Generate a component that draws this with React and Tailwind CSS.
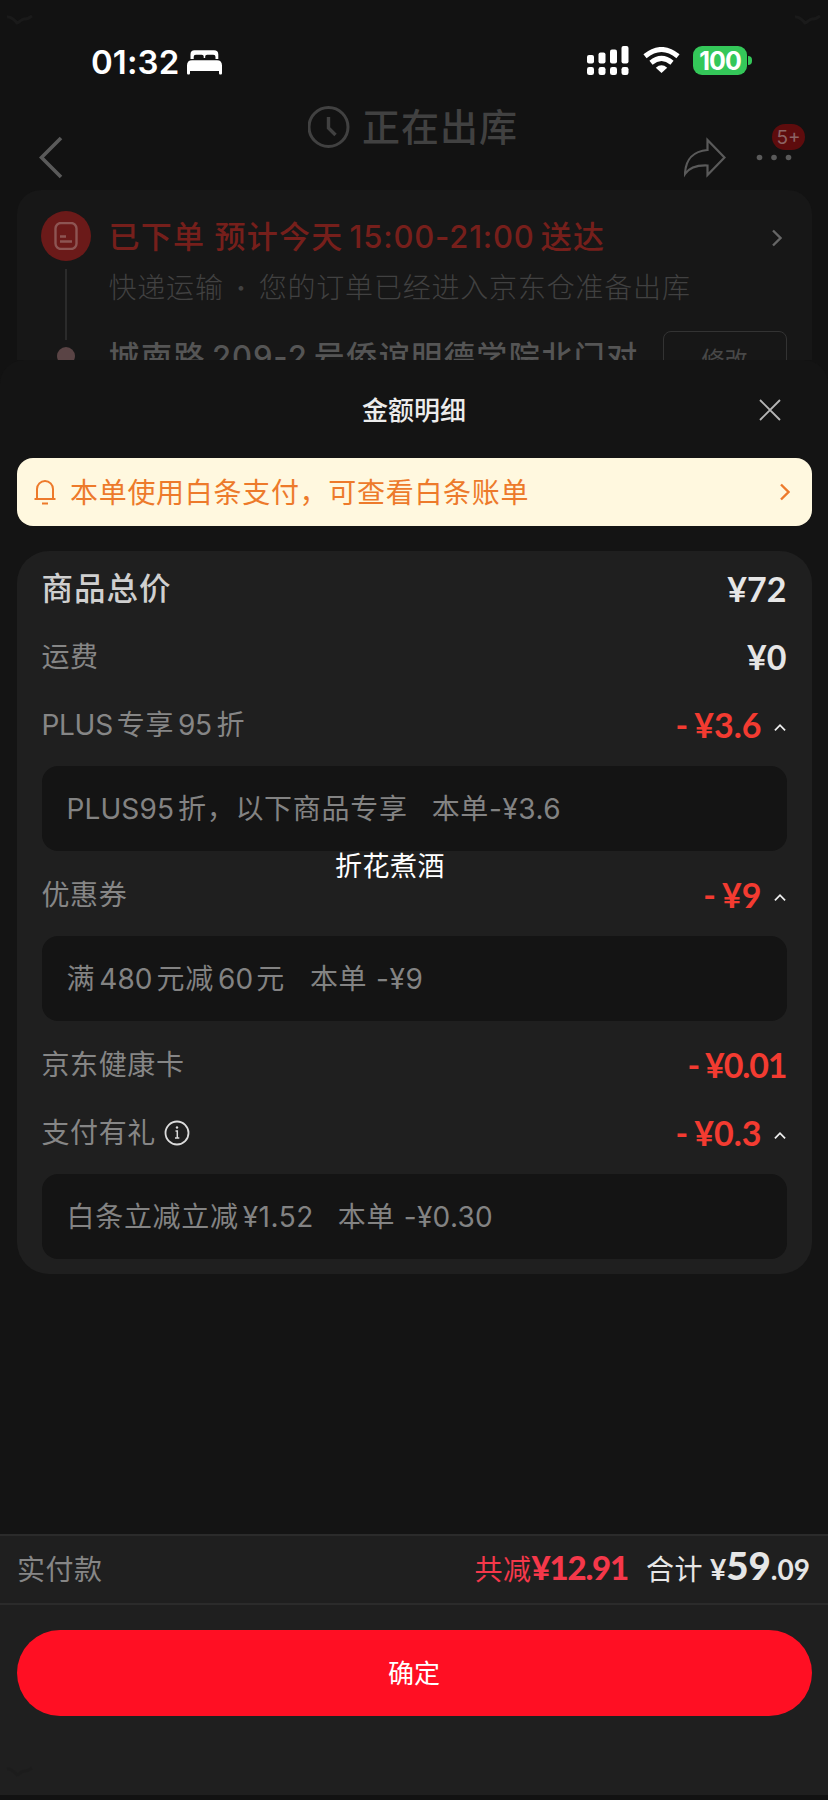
import React from "react";

const NOTE = "flex h-[85px] items-center rounded-[16px] bg-[#141414] pl-[25px] text-[28px] tracking-[0.7px] text-[#838383]";

const rows = [
  { label: "商品总价", price: "¥72", main: true },
  { label: "运费", price: "¥0" },
  {
    label: <><span className="tracking-[-0.3px]">PLUS</span><span className="mx-[4px]">专享</span><span className="tracking-[-0.5px]">95</span><span className="ml-[5px]">折</span></>,
    price: "¥3.6",
    off: true,
    note: <><span className="tracking-[0.1px]">PLUS95</span><span className="ml-[4px]">折，以下商品专享</span><span className="ml-[24px]">本单<span className="tracking-[0.5px]">-¥3.6</span></span></>,
  },
  {
    label: "优惠券",
    price: "¥9",
    off: true,
    note: <>满<span className="mx-[4px] tracking-[0.1px]">480</span>元减<span className="ml-[4px] mr-[3px] tracking-[0.1px]">60</span>元<span className="ml-[25px]">本单 -¥9</span></>,
  },
  { label: "京东健康卡", price: "¥0.01", off: true, tight: true },
  {
    label: "支付有礼",
    price: "¥0.3",
    off: true,
    info: true,
    note: <>白条立减立减<span className="ml-[4px] tracking-[0.5px]">¥1.52</span><span className="ml-[24px]">本单 <span className="tracking-[0.3px]">-¥0.30</span></span></>,
  },
];

function Chevron({ className }) {
  return (
    <svg className={className} width="10" height="18" viewBox="0 0 10 18" fill="none" stroke="currentColor" strokeWidth="2.4">
      <path d="M1 1.5 8.5 9 1 16.5" />
    </svg>
  );
}

function Smudge({ className }) {
  return (
    <svg className={className} width="28" height="14" viewBox="0 0 28 14" fill="none" stroke="#1a1a1a" strokeWidth="3">
      <path d="M1 3c5-1 7 3 10 6 3 0 4-5 8-4 3 0 4-1 7-3" />
    </svg>
  );
}

function StatusBar() {
  return (
    <div className="flex h-[98px] items-start pl-[91px] pr-[76px] pt-[44px] text-white">
      <div className="flex h-[36px] w-[96px] items-center whitespace-nowrap text-[33px] font-semibold leading-none tracking-[0.1px]">01:32</div>
      <svg className="mt-[6px]" width="35" height="25" viewBox="0 0 35 25" fill="currentColor">
        <path d="M3.500 9V4.500C3.500 1.500 5 .3 7.500.3H27c2.800 0 4.300 1.200 4.300 4.200V9h-2.800V7.200c0-1.700-.8-2.500-2.300-2.500h-6c-1.300 0-2 .8-2 2V8h-1.500V6.700c0-1.200-.7-2-2-2H9c-1.600 0-2.300.8-2.300 2.500V9z" />
        <path d="M0 15.500C0 12 1.800 10.200 5 10.200h25c3.200 0 5 1.800 5 5.300V23c0 1-.5 1.500-1.500 1.500S32 24 32 23v-2H3v2c0 1-.5 1.500-1.500 1.500S0 24 0 23z" />
      </svg>
      <div className="ml-auto flex items-center">
        <svg className="mt-[2px]" width="42" height="29" viewBox="0 0 42 29" fill="currentColor">
          <rect x="0" y="9" width="7" height="8.500" rx="2" />
          <rect x="11.500" y="6.500" width="7" height="11" rx="2" />
          <rect x="23" y="3.500" width="7" height="14" rx="2" />
          <rect x="34.500" y="0" width="7" height="17.500" rx="2" />
          <rect x="0" y="21" width="7" height="8" rx="2.300" />
          <rect x="11.500" y="21" width="7" height="8" rx="2.300" />
          <rect x="23" y="21" width="7" height="8" rx="2.300" />
          <rect x="34.500" y="21" width="7" height="8" rx="2.300" />
        </svg>
        <svg className="ml-[14px] mt-[1px]" width="37" height="26" viewBox="0 0 37 26">
          <g fill="none" stroke="currentColor" strokeWidth="5">
            <path d="M2 9.300Q18.500-4.300 35 9.300" />
            <path d="M8 15.700q10.500-8.600 21 0" />
          </g>
          <path d="M12.800 20.700q5.700-4.700 11.400 0L18.500 26z" fill="currentColor" />
        </svg>
        <div className="ml-[13px] mt-[2px] flex h-[29px] w-[54px] items-center justify-center rounded-[9px] bg-[#34c759] pt-[1px] text-[25px] font-bold leading-none tracking-[-1px]">100</div>
        <div className="ml-[1px] mt-[2px] h-[9px] w-[4px] rounded-r-full bg-[#34c759]" />
      </div>
    </div>
  );
}

function OrderHeader() {
  return (
    <div className="relative h-[92px]">
      <div className="flex items-center pl-[308px] pt-[6px] text-[#414141]">
        <svg width="42" height="46" viewBox="0 0 42 46" fill="none" stroke="currentColor">
          <circle cx="20.500" cy="23" r="19.500" strokeWidth="3" />
          <path d="M20.500 13v11l7 7" strokeWidth="3.400" />
        </svg>
        <div className="ml-[12px] text-[38px] font-medium leading-[46px] tracking-[1px]">正在出库</div>
      </div>
      <div className="absolute left-[39px] right-[23px] top-[26px] flex items-center">
        <svg width="24" height="66" viewBox="0 0 24 66" fill="none" stroke="#5a5a5a" strokeWidth="3.600">
          <path d="M22 14 2.500 33.500 22 53" />
        </svg>
        <svg className="ml-auto" width="42" height="66" viewBox="0 0 42 66" fill="none" stroke="#5a5a5a" strokeWidth="2.200">
          <path d="M23.500 16v10C10 27 1.500 35 1 50c4-6 10-9 22.500-8.500V51L40.500 33.500z" />
        </svg>
        <div className="relative ml-[30px] flex h-[66px] w-[49px] items-center">
          <svg width="36" height="8" viewBox="0 0 36 8" fill="#5a5a5a">
            <circle cx="3.500" cy="4.500" r="2.800" />
            <circle cx="18" cy="4.500" r="2.800" />
            <circle cx="32.500" cy="4.500" r="2.800" />
          </svg>
          <div className="absolute right-0 top-0 flex h-[26px] w-[33px] items-center justify-center rounded-full bg-[#5e0c0d] text-[19px] leading-none text-[#8c6464]">5+</div>
        </div>
      </div>
    </div>
  );
}

function Delivery() {
  return (
    <div className="mx-[16.5px] flex h-[400px] rounded-[24px] bg-[#171717] pl-[24.5px] pr-[25px] pt-[21px]">
      <div className="flex w-[50px] flex-col items-center">
        <div className="grid size-[50px] place-items-center rounded-full bg-[#6b1a19]">
          <svg width="24" height="28" viewBox="0 0 24 28" fill="none" stroke="#8d5553" strokeWidth="2.400">
            <rect x="1.500" y="1" width="21" height="26" rx="5.500" />
            <path d="M6 14.500h6M6 19.500h12" />
          </svg>
        </div>
        <div className="mt-[8px] h-[71px] w-[2px] bg-[#2b2b2b]" />
        <div className="mt-[7px] size-[18px] rounded-full bg-[#5a4445]" />
      </div>
      <div className="ml-[17.5px] flex-1">
        <div className="flex h-[50px] items-center whitespace-nowrap pt-[3px] text-[31px] font-medium tracking-[1.300px] text-[#761f1b]">
          已下单<span className="ml-[9px]">预计今天</span>
          <span className="mx-[6px] tracking-[0.800px]">15:00-21:00</span>送达
          <Chevron className="ml-auto mr-[5px] text-[#666]" />
        </div>
        <div className="flex h-[52px] items-center whitespace-nowrap pt-[1px] text-[28px] font-light tracking-[0.800px] text-[#414141]">
          快递运输<span className="flex w-[35px] justify-center font-bold">·</span>您的订单已经进入京东仓准备出库
        </div>
        <div className="mt-[18px] flex items-start">
          <div className="mt-[4px] whitespace-nowrap text-[31px] font-medium leading-[44px] tracking-[1.500px] text-[#555]">
            城南路<span className="mx-[6px] tracking-[0.900px]">209-2</span>号侨谊明德学院北门对
          </div>
          <div className="ml-auto flex h-[56px] w-[124px] items-center justify-center rounded-[8px] border border-[#333] pt-[2px] text-[23px] text-[#484848]">修改</div>
        </div>
      </div>
    </div>
  );
}

function Price({ row }) {
  return (
    <span className={`flex items-center font-[Lato] text-[34px] font-bold leading-none ${row.off ? "text-[#f33b31]" : "text-[#e6e6e6]"} ${row.tight ? "tracking-[-1.1px]" : ""}`}>
      {row.off && <span className="mr-[6px]">-</span>}
      {row.price}
    </span>
  );
}

function PriceRow({ row }) {
  return (
    <>
      <div className="flex h-[68px] items-center">
        <span className={row.main ? "text-[31.5px] font-medium tracking-[1px] text-[#cfcfcf]" : "text-[28px] tracking-[0.6px] text-[#868686]"}>{row.label}</span>
        {row.info && (
          <svg className="ml-[8px]" width="26" height="26" viewBox="0 0 26 26" fill="none" stroke="#dcdcdc">
            <circle cx="13" cy="13" r="11.500" strokeWidth="1.800" />
            <path d="M11.500 11h1.800v7M11 18h4.300" strokeWidth="1.500" />
            <circle cx="13" cy="7.500" r="1.200" fill="#dcdcdc" stroke="none" />
          </svg>
        )}
        <div className="ml-auto flex items-center">
          <Price row={row} />
          {row.note && (
            <svg className="ml-[12px] mr-[1px] mt-[4px]" width="12" height="9" viewBox="0 0 13 9" fill="none" stroke="#eee" strokeWidth="1.900">
              <path d="m1 7.500 5.500-5.500L12 7.500" />
            </svg>
          )}
        </div>
      </div>
      {row.note && (
        <div className="mb-[10px] mt-[7px]">
          <div className={NOTE}>{row.note}</div>
        </div>
      )}
    </>
  );
}

export default function App() {
  return (
    <div className="relative flex h-[1800px] w-[828px] flex-col overflow-hidden bg-[#121212] font-[Inter,'Noto_Sans_CJK_SC',sans-serif]">
      <div className="h-[360px] shrink-0 overflow-hidden">
        <StatusBar />
        <OrderHeader />
        <Delivery />
      </div>

      <section className="flex flex-1 flex-col rounded-t-[24px] bg-[#141414]">
        <header className="relative flex h-[98px] items-center justify-center pt-[2px] text-[26px] font-medium text-[#ececec]">
          金额明细
          <svg className="absolute right-[47px]" width="22" height="22" viewBox="0 0 22 22" fill="none" stroke="#b5b5b5" strokeWidth="1.900">
            <path d="m1 1 20 20M21 1 1 21" />
          </svg>
        </header>

        <div className="mx-[16.5px] flex h-[68px] items-center rounded-[16px] bg-[#fff8df] pl-[17.5px] pr-[22px] text-[28px] tracking-[0.700px] text-[#ed7a2b]">
          <svg width="22" height="26" viewBox="0 0 22 26" fill="none" stroke="currentColor" strokeWidth="2">
            <path d="M3 20V10a8 8 0 0 1 16 0v10M.5 20h21M8 24.500h6" />
          </svg>
          <span className="ml-[14px] pt-[1px]">本单使用白条支付，可查看白条账单</span>
          <Chevron className="ml-auto" />
        </div>

        <div className="mx-[16.5px] mt-[25px] h-[723px] rounded-[32px] bg-[#1f1f1f] px-[25px] pt-[4px]">
          {rows.map((row) => (
            <PriceRow key={row.price} row={row} />
          ))}
        </div>

        <footer className="mt-auto h-[266px] border-b-[5px] border-[#121212] bg-[#1f1f1f]">
          <div className="flex h-[71px] items-center border-y-2 border-[#2b2b2b] pl-[17px] pr-[18px] text-[28px] tracking-[0.5px]">
            <span className="text-[#868686]">实付款</span>
            <div className="mb-[8px] ml-auto flex items-baseline text-[#f5384a]">
              共减
              <span className="font-[Lato] text-[33px] font-black tracking-[-1.2px]">¥12.91</span>
              <span className="ml-[18px] text-[#e6e6e6]">合计</span>
              <span className="ml-[7px] flex items-baseline font-[Lato] text-[28px] font-bold tracking-normal text-[#e6e6e6]">
                ¥<b className="text-[38.5px] font-black">59</b>.09
              </span>
            </div>
          </div>
          <button className="mx-[16.5px] mt-[25px] flex h-[86px] w-[795px] items-center justify-center rounded-full bg-[#ff0f23] text-[26px] text-white">确定</button>
        </footer>
      </section>

      <div className="absolute left-[335px] top-[847px] whitespace-nowrap text-[27px] leading-[40px] tracking-[0.500px] text-white">折花煮酒</div>
      <Smudge className="absolute left-[6px] top-[14px]" />
      <Smudge className="absolute right-[6px] top-[14px]" />
      <Smudge className="absolute bottom-[20px] left-[6px] opacity-40" />
    </div>
  );
}
